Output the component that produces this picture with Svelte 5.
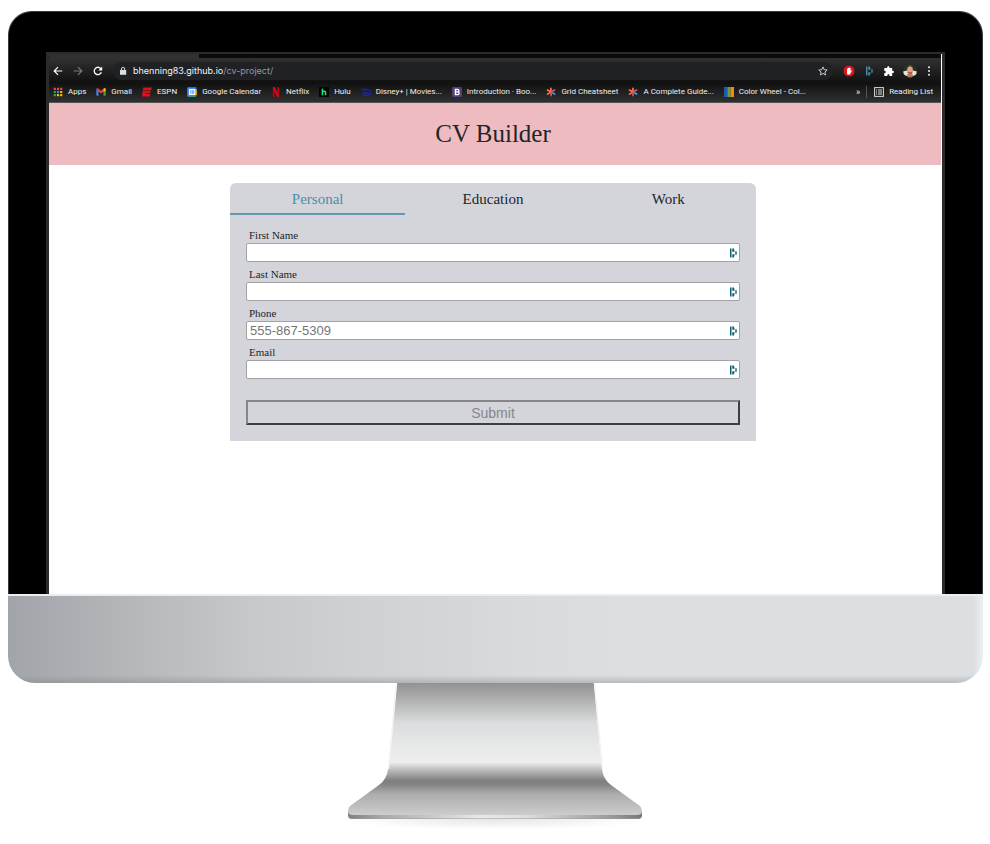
<script>
  const bookmarks = [
    { icon: 'apps', label: 'Apps' },
    { icon: 'gmail', label: 'Gmail' },
    { icon: 'espn', label: 'ESPN' },
    { icon: 'calendar', label: 'Google Calendar' },
    { icon: 'netflix', label: 'Netflix' },
    { icon: 'hulu', label: 'Hulu' },
    { icon: 'disney', label: 'Disney+ | Movies...' },
    { icon: 'bootstrap', label: 'Introduction · Boo...' },
    { icon: 'star', label: 'Grid Cheatsheet' },
    { icon: 'star', label: 'A Complete Guide...' },
    { icon: 'wheel', label: 'Color Wheel - Col...' }
  ];
  const fields = [
    { id: 'first', label: 'First Name', type: 'text', placeholder: '' },
    { id: 'last', label: 'Last Name', type: 'text', placeholder: '' },
    { id: 'phone', label: 'Phone', type: 'tel', placeholder: '555-867-5309' },
    { id: 'email', label: 'Email', type: 'email', placeholder: '' }
  ];
  const tabs = ['Personal', 'Education', 'Work'];
  let active = $state('Personal');
</script>

{#snippet dashlane(color)}
  <svg class="dash" viewBox="0 0 8 10" fill={color} aria-hidden="true">
    <path d="M1 .6h1.500v8.800H1zM3.300.6h1.500l.700 1.700v1.500H3.300zM3.300 6.300h2.200v1.400l-.700 1.700H3.300zM6.300 3.200h1.400v3.600H6.300z" />
  </svg>
{/snippet}

{#snippet favicon(name)}
  <svg class="fav" viewBox="0 0 10 10" aria-hidden="true">
    {#if name === 'apps'}
      <path fill="#e8453c" d="M.7.7h2.200v2.200H.7zM3.900.7h2.200v2.200H3.900zM7.100.7h2.200v2.200H7.100z" />
      <path fill="#34a853" d="M.7 3.900h2.200v2.200H.7zM.7 7.100h2.200v2.200H.7z" />
      <path fill="#4285f4" d="M3.900 3.900h2.200v2.200H3.900z" />
      <path fill="#fbbc05" d="M7.100 3.900h2.200v2.200H7.100zM3.900 7.100h2.200v2.200H3.900zM7.100 7.100h2.200v2.200H7.100z" />
    {:else if name === 'gmail'}
      <path fill="#4285f4" d="M.3 2.5 2.5 4v4.8H1a.7.7 0 0 1-.7-.7z" />
      <path fill="#34a853" d="M7.5 4l2.2-1.5v5.6a.7.7 0 0 1-.7.7H7.5z" />
      <path fill="#ea4335" d="M.3 2.6C.3 1.3 1.3 1 2.1 1.6L5 3.8l2.9-2.2c.8-.6 1.8-.3 1.8 1L7.5 4.6 5 6.4 2.5 4.6z" />
      <path fill="#fbbc04" d="m7.5 1.9.4-.3c.8-.6 1.8-.3 1.8 1v.9L7.5 5.1z" />
    {:else if name === 'espn'}
      <path fill="#d8131d" d="M1.2.6h8.600l-.4 2.500H.8zM.7 3.600h8.100l-.7 2.300h-4l-.2.800h4.400L7.800 9.400H0z" />
    {:else if name === 'calendar'}
      <path fill="#4285f4" d="M1 .2h8v9.6H1a.8.8 0 0 1-.8-.8V1A.8.8 0 0 1 1 .2z" />
      <path fill="#1967d2" d="M8 .2h1a.8.8 0 0 1 .8.8v1.2H8z" />
      <path fill="#fbbc04" d="M8 2.2h1.8V8H8z" />
      <path fill="#34a853" d="M2 8h6v1.8H2z" />
      <path fill="#ea4335" d="M8 8h1.8L8 9.8z" />
      <path fill="#fff" d="M2 2h6v6H2z" />
      <path fill="none" stroke="#4285f4" stroke-width=".8" d="m3 3.800.8-.5v3.500" />
      <path fill="none" stroke="#4285f4" stroke-width=".7" d="M6 3.300c1.300 0 1.300 1.700 0 1.700s-1.300-1.700 0-1.700zM6 5c1.500 0 1.500 1.900 0 1.900S4.500 5 6 5z" />
    {:else if name === 'netflix'}
      <path fill="#b1060f" d="M1.8.2h2v9.6l-2 .1zM6.2.2h2v9.7l-2-.1z" />
      <path fill="#e50914" d="M1.8.2h2l4.4 9.7-2-.2z" />
    {:else if name === 'hulu'}
      <path fill="#050505" d="M0 0h10v10H0z" />
      <path fill="none" stroke="#1ce783" stroke-width="1.5" d="M3.4 1.8v6.4M3.4 5.2c0-1.3 3.2-1.3 3.2.2v2.8" />
    {:else if name === 'disney'}
      <path fill="none" stroke="#1a20d8" stroke-width="1.1" stroke-linecap="round" d="M.7 3.3C4 .8 9.6 3 9.4 5.900 9.200 8.500 3 9.600 2 7.600c-.8-1.700 4.200-2.300 5-1.200M4.200 3.800v4.400" />
    {:else if name === 'bootstrap'}
      <rect width="10" height="10" rx="1.4" fill="#563d7c" />
      <path fill="none" stroke="#fff" stroke-width="1.3" d="M3.4 2.4h2c2 0 2 2.4 0 2.4h-2 2.2c2.1 0 2.1 2.8 0 2.8H3.4zM3.6 2v6" />
    {:else if name === 'star'}
      <g stroke-width="1.6" stroke-linecap="round">
        <path stroke="#ff7a45" d="M5 5 4.900 1.200M5 5 1.400 3" />
        <path stroke="#e8478b" d="m5 5 3.600-2M5 5 5.100 8.800" />
        <path stroke="#f2683c" d="M5 5 1.400 7.200" />
        <path stroke="#3bb9c9" d="m6.800 5.900 1.900 1.200" />
      </g>
      <circle cx="5" cy="5" r="1.1" fill="#ee5050" />
    {:else}
      <path fill="#1c5bb0" d="M0 0h3.4v10H0z" />
      <path fill="#6b9e3e" d="M3.4 0h3.3v10H3.4z" />
      <path fill="#f08a1d" d="M6.7 0H10v10H6.7z" />
    {/if}
  </svg>
{/snippet}

<div class="monitor">
  <div class="bezel">
    <div class="screen">
      <div class="tabstrip"><span class="tabend"></span></div>
      <div class="toolbar">
        <button class="ic" aria-label="Back">
          <svg viewBox="0 0 10 10"><path d="M9.3 5H1.2M5 1.2 1.2 5 5 8.8" fill="none" stroke="#fff" stroke-width="1.2" /></svg>
        </button>
        <button class="ic" aria-label="Forward">
          <svg viewBox="0 0 10 10"><path d="M.7 5h8.1M5 1.2 8.8 5 5 8.8" fill="none" stroke="#77797c" stroke-width="1.2" /></svg>
        </button>
        <button class="ic" aria-label="Reload">
          <svg viewBox="0 0 10 10"><path d="M8.4 6.3A3.7 3.7 0 1 1 7.8 2.6" fill="none" stroke="#fff" stroke-width="1.3" /><path d="M9.2.6v3.8H5.4z" fill="#fff" /></svg>
        </button>
        <div class="address">
          <svg class="lock" viewBox="0 0 8 10" aria-hidden="true"><path fill="#dcdee0" d="M1 4h6.2v4.8H1z" /><path fill="none" stroke="#dcdee0" d="M2.5 4.4V3a1.6 1.6 0 0 1 3.2 0v1.4" /></svg>
          <span class="url"><b>bhenning83.github.io</b>/cv-project/</span>
          <svg class="fave" viewBox="0 0 10 10" aria-hidden="true"><path fill="none" stroke="#d5d7d9" stroke-width=".9" d="m5 .9 1.2 2.8 3 .3-2.3 2 .7 3L5 7.4 2.4 9l.7-3L.8 4l3-.3z" /></svg>
        </div>
        <div class="extensions">
          <svg viewBox="0 0 12 12" aria-hidden="true"><path fill="#e3131c" d="M3.800.7h4.400l3.100 3.100v4.400l-3.100 3.100H3.800L.7 8.200V3.800z" /><path fill="#fff" d="M4 6V3.700h.9V3h.9v-.5h.9V3h.9v3l.7-.7.600.500-1.500 2.900c-.5.900-3 .9-3.400 0z" /></svg>
          <span class="ext">{@render dashlane('#478ba5')}</span>
          <svg viewBox="0 0 12 12" aria-hidden="true"><path fill="#fff" d="M1.300 3h2.900c-.5-2.400 2.800-2.400 2.300 0h2.700v2.700c2.400-.4 2.400 2.800 0 2.300v2.900H6.500c.3-2.300-2.500-2.300-2.200 0h-3V8c2.200.3 2.200-2.400 0-2.100z" /></svg>
          <svg class="avatar" viewBox="0 0 14 14" aria-hidden="true">
            <defs><clipPath id="round"><circle cx="7" cy="7" r="6.8" /></clipPath></defs>
            <g clip-path="url(#round)">
              <path fill="#28302a" d="M0 0h14v14H0z" />
              <path fill="#e5e2de" d="M0 7.500 4 6.500h6l4 1v3L10 12H4L0 10.500z" />
              <path fill="#b87953" d="M4 10.5 7 9l3 1.5-1 3H5z" />
              <ellipse cx="7" cy="5.900" rx="2.800" ry="4.300" fill="#dca482" />
              <path fill="#4a3024" d="M4.200 4C4 .4 10 .4 9.800 4 8.600 2 5.600 2 4.200 4z" />
              <path fill="#9a5f42" d="M4.400 7.400c1.400 1 4 1 5.200 0C9.400 11 4.600 11 4.400 7.400z" />
            </g>
          </svg>
          <svg class="dots" viewBox="0 0 4 12" fill="#f0f0f0" aria-hidden="true"><circle cx="2" cy="2.2" r="1" /><circle cx="2" cy="6" r="1" /><circle cx="2" cy="9.8" r="1" /></svg>
        </div>
      </div>
      <nav class="bookmarks">
        {#each bookmarks as b}
          <a href="#bookmark">{@render favicon(b.icon)}{b.label}</a>
        {/each}
        <span class="more">»</span>
        <a class="reading" href="#reading">
          <svg class="fav" viewBox="0 0 10 10" aria-hidden="true"><rect x=".6" y=".6" width="8.8" height="8.8" fill="none" stroke="#dadada" /><path stroke="#dadada" d="M2 3h1M4 3h4M2 5h1M4 5h4M2 7h1M4 7h4" /></svg>Reading List
        </a>
      </nav>
      <div class="page">
        <header><h1>CV Builder</h1></header>
        <main>
          <div class="card">
            <div class="tabs">
              {#each tabs as t}
                <button class:active={active === t} onclick={() => (active = t)}>{t}</button>
              {/each}
            </div>
            <form onsubmit={(e) => e.preventDefault()}>
              {#each fields as f}
                <label for={f.id}>{f.label}</label>
                <div class="box">
                  <input id={f.id} type={f.type} placeholder={f.placeholder} />
                  {@render dashlane('#0e5f73')}
                </div>
              {/each}
              <button class="submit" disabled>Submit</button>
            </form>
          </div>
        </main>
      </div>
    </div>
  </div>
  <div class="chin"></div>
  <svg class="stand" viewBox="1 0 330 160" aria-hidden="true">
    <defs>
      <linearGradient id="metal" x1="0" y1="0" x2="0" y2="1">
        <stop offset="0" stop-color="#929292" />
        <stop offset=".1" stop-color="#a9a9a9" />
        <stop offset=".3" stop-color="#dadcdd" />
        <stop offset=".42" stop-color="#e2e5e6" />
        <stop offset=".5" stop-color="#e9e9e9" />
        <stop offset=".6" stop-color="#ededed" />
        <stop offset=".66" stop-color="#bbb" />
        <stop offset=".74" stop-color="#7f7f7f" />
        <stop offset=".77" stop-color="#858585" />
        <stop offset=".84" stop-color="#acacac" />
        <stop offset="1" stop-color="#ccc" />
      </linearGradient>
      <linearGradient id="lip">
        <stop offset="0" stop-color="#808080" />
        <stop offset=".12" stop-color="#aaa" />
        <stop offset=".45" stop-color="#e8e8e8" />
        <stop offset=".6" stop-color="#dedede" />
        <stop offset=".9" stop-color="#999" />
        <stop offset="1" stop-color="#777" />
      </linearGradient>
      <radialGradient id="shade">
        <stop offset="0" stop-color="#999" stop-opacity=".25" />
        <stop offset="1" stop-color="#999" stop-opacity="0" />
      </radialGradient>
    </defs>
    <ellipse cx="165" cy="136" rx="155" ry="11" fill="url(#shade)" />
    <path fill="url(#lip)" d="M18 128h294v4q0 4-4 4H22q-4 0-4-4z" />
    <path fill="#999" d="M19 134q1 1.500 4 1.500h284q3 0 4-1.500-1 2-4 2H23q-3 0-4-2z" />
    <path fill="url(#metal)" d="M67 0h197l8 86q1 10 9 16l29 21q2 2 2 5 0 4-5 4H23q-5 0-5-4 0-3 2-5l29-21q8-6 9-16z" />
    <path fill="none" stroke="#f4f4f4" stroke-width="1.500" d="m66.500 0-8 86M264.500 0l8 86" />
    <path fill="none" stroke="url(#lip)" d="M20 132.500h290" />
  </svg>
</div>

<style>
  :global(body) { margin: 0; background: #fff; }
  * { box-sizing: border-box; }
  button { border: 0; padding: 0; background: none; }
  svg { display: block; flex: none; }
  .monitor { padding: 11px 7px 0 8px; }
  .bezel {
    background: #000;
    border: 1px solid #3a3a3a;
    border-bottom: 0;
    border-radius: 24px 24px 0 0;
    padding: 40px 37px 0;
  }
  .screen {
    border: solid #2b2b2b;
    border-width: 2px 3px 0;
    background: #fff;
  }
  .tabstrip { height: 5px; margin-right: 1px; background: #0b0b0b; border-bottom: 1px solid #323232; }
  .tabend { display: block; width: 150px; height: 5px; border-radius: 0 0 0 4px; background: #313131; }
  .toolbar {
    display: flex;
    align-items: center;
    gap: 10px;
    height: 24px;
    margin-right: 1px;
    padding: 0 8px 0 4px;
    background: linear-gradient(#303030, #101010);
  }
  .ic { width: 10px; height: 10px; }
  .ic svg { width: 10px; height: 10px; }
  .address {
    display: flex;
    align-items: center;
    flex: 1;
    height: 18px;
    padding: 0 5px 0 6px;
    border-radius: 9px;
    background: #202125;
    color: #96999c;
    font: 9px/18px Inter, "Liberation Sans", sans-serif;
  }
  .lock { width: 8px; height: 10px; margin-right: 6px; }
  .url { flex: 1; white-space: nowrap; }
  .url b { font-weight: 400; color: #f2f3f4; }
  .fave { width: 10px; height: 10px; }
  .extensions { display: flex; align-items: center; gap: 8px; }
  .extensions svg { width: 12px; height: 12px; }
  .extensions .ext { display: flex; justify-content: center; width: 12px; }
  .extensions .ext svg { width: 8px; height: 10px; }
  .extensions .avatar { width: 14px; height: 14px; }
  .extensions .dots { width: 8px; }
  .bookmarks {
    display: flex;
    align-items: center;
    gap: 10px;
    height: 20px;
    margin-right: 1px;
    padding: 0 8px 2px 4px;
    background: linear-gradient(#111, #303030);
    border-bottom: 1px solid #555;
    color: #f0f0f0;
    font: 8px/10px Roboto, "Liberation Sans", sans-serif;
    white-space: nowrap;
  }
  .bookmarks a { display: flex; align-items: center; gap: 5px; color: inherit; text-decoration: none; }
  .fav { width: 10px; height: 10px; }
  .more { margin-left: auto; font-size: 9px; }
  .bookmarks .reading { position: relative; margin-left: 4px; }
  .reading::before { content: ""; position: absolute; left: -8px; top: -1px; width: 1px; height: 12px; background: #555; }
  .page { min-height: 491px; font-family: "Liberation Serif", "Times New Roman", serif; color: #212529; }
  header { margin-right: 1px; padding-right: 4px; background: #eebbc0; }
  h1 { margin: 0; font-size: 25px; font-weight: 400; line-height: 62px; text-align: center; }
  main { padding: 18px 5px 0 0; }
  .card { max-width: 526px; margin: 0 auto; border-radius: 6px 6px 0 0; background: #d4d5db; overflow: hidden; }
  .tabs { display: flex; }
  .tabs button {
    flex: 1;
    height: 32px;
    padding-top: 2px;
    border-bottom: 2px solid transparent;
    font: 15px/28px "Liberation Serif", "Times New Roman", serif;
    color: #212529;
  }
  .tabs .active { color: #4a8fab; border-bottom-color: #6299b1; }
  form { padding: 13px 16px 16px; }
  label { display: block; padding: 0 0 1px 3px; font-size: 11px; line-height: 14px; }
  .box { position: relative; margin-bottom: 5px; }
  .box input {
    display: block;
    width: 100%;
    height: 19px;
    padding: 0 20px 0 3px;
    border: 1px solid #a2a2a6;
    border-radius: 2px;
    background: #fff;
    font: 13px "Liberation Sans", Arial, sans-serif;
  }
  .box input::placeholder { color: #757575; }
  .box .dash { position: absolute; right: 3px; top: 5px; }
  .dash { width: 8px; height: 10px; }
  .submit {
    display: block;
    width: 100%;
    height: 25px;
    margin-top: 21px;
    border: 2px solid;
    border-color: #85878a #3b3e42 #3b3e42 #85878a;
    background: #d4d5db;
    color: #85868a;
    font: 14px "Liberation Sans", Arial, sans-serif;
  }
  .chin {
    height: 89px;
    border-radius: 0 0 27px 27px;
    border-top: 2px solid #ededf0;
    background:
      linear-gradient(transparent 91%, rgb(120 120 120 / 0.35)),
      linear-gradient(90deg, #a1a5aa, #b0b4b7 10%, #c5c9cc 25%, #cdd1d4 35%, #d8dcdf 55%, #dbdfe2 65%, #dbdfe2 99%, #edf0f1);
  }
  .stand { width: 330px; height: 160px; margin: 0 auto; }
</style>
